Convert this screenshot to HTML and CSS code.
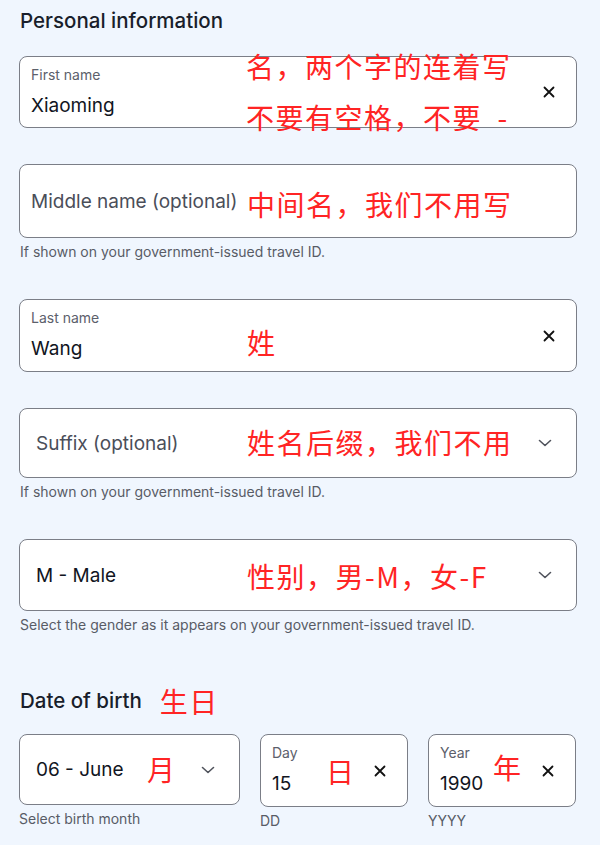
FILE: index.html
```html
<!DOCTYPE html>
<html lang="en">
<head>
<meta charset="utf-8">
<title>Personal information</title>
<link rel="stylesheet" href="styles.css">
</head>
<body>
<main class="page">
  <h2 class="heading">Personal information</h2>

  <div class="field input f1">
    <span class="label">First name</span>
    <span class="value">Xiaoming</span>
    <svg class="clear" viewBox="0 0 12 12"><path d="M1.5 1.5L10.5 10.5M10.5 1.5L1.5 10.5"/></svg>
    <span class="note n1a">名，两个字的连着写</span>
    <span class="note n1b">不要有空格，不要&nbsp;&nbsp;-</span>
  </div>

  <div class="field placeholder f2">
    <span class="ph">Middle name (optional)</span>
    <span class="note n2">中间名，我们不用写</span>
  </div>
  <p class="help">If shown on your government-issued travel ID.</p>

  <div class="field input f3">
    <span class="label">Last name</span>
    <span class="value">Wang</span>
    <svg class="clear" viewBox="0 0 12 12"><path d="M1.5 1.5L10.5 10.5M10.5 1.5L1.5 10.5"/></svg>
    <span class="note n3">姓</span>
  </div>

  <div class="field select f4">
    <span class="ph">Suffix (optional)</span>
    <svg class="chev" viewBox="0 0 14 8"><path d="M1.5 1.5L7 6.5L12.5 1.5"/></svg>
    <span class="note n4">姓名后缀，我们不用</span>
  </div>
  <p class="help">If shown on your government-issued travel ID.</p>

  <div class="field select f5">
    <span class="sel">M - Male</span>
    <svg class="chev" viewBox="0 0 14 8"><path d="M1.5 1.5L7 6.5L12.5 1.5"/></svg>
    <span class="note n5">性别，男-M，女-F</span>
  </div>
  <p class="help">Select the gender as it appears on your government-issued travel ID.</p>

  <h2 class="heading dob">Date of birth <span class="note-inline">生日</span></h2>

  <div class="dob-row">
    <div class="col">
      <div class="field select month">
        <span class="sel">06 - June</span>
        <svg class="chev" viewBox="0 0 14 8"><path d="M1.5 1.5L7 6.5L12.5 1.5"/></svg>
        <span class="note n6">月</span>
      </div>
      <p class="help">Select birth month</p>
    </div>
    <div class="col">
      <div class="field input small">
        <span class="label">Day</span>
        <span class="value">15</span>
        <svg class="clear" viewBox="0 0 12 12"><path d="M1.5 1.5L10.5 10.5M10.5 1.5L1.5 10.5"/></svg>
        <span class="note n7">日</span>
      </div>
      <p class="help">DD</p>
    </div>
    <div class="col">
      <div class="field input small">
        <span class="label">Year</span>
        <span class="value">1990</span>
        <svg class="clear" viewBox="0 0 12 12"><path d="M1.5 1.5L10.5 10.5M10.5 1.5L1.5 10.5"/></svg>
        <span class="note n8">年</span>
      </div>
      <p class="help">YYYY</p>
    </div>
  </div>
</main>
</body>
</html>
```

FILE: styles.css
```css
html, body {
  margin: 0;
  padding: 0;
  background: #f0f6fe;
}

body {
  font-family: Inter, "Noto Sans", "Liberation Sans", sans-serif;
  color: #191e2b;
  width: 600px;
  height: 845px;
  overflow: hidden;
}

.page {
  padding: 0 23px 0 19px;
}

.heading {
  margin: 0 0 21px 1px;
  padding-top: 7px;
  font-size: 20.5px;
  line-height: 28px;
  font-weight: 500;
  color: #191e2b;
}

.heading.dob {
  margin-top: 54px;
  margin-bottom: 19px;
  padding-top: 0;
  display: flex;
  align-items: center;
}

.field {
  position: relative;
  box-sizing: border-box;
  background: #ffffff;
  border: 1px solid #7b7e87;
  border-radius: 8px;
  height: 72px;
}

.input {
  padding: 0 11px;
}

.label {
  position: absolute;
  left: 11px;
  top: 9px;
  font-size: 14px;
  line-height: 18px;
  color: #5c606b;
}

.value {
  position: absolute;
  left: 11px;
  top: 37px;
  font-size: 19px;
  line-height: 24px;
  color: #111522;
}

.placeholder, .select {
  display: flex;
  align-items: center;
}

.placeholder {
  padding: 0 11px;
}

.select {
  padding: 0 16px;
  height: 70px;
}

.ph {
  font-size: 19px;
  color: #4a4e59;
}

.sel {
  font-size: 19px;
  color: #111522;
}

.f2 {
  margin-top: 36px;
  height: 74px;
}

.f3 {
  margin-top: 39px;
  height: 73px;
}

.f4 {
  margin-top: 36px;
}

.f5 {
  margin-top: 39px;
  height: 72px;
}

.help {
  margin: 6px 0 0 1px;
  font-size: 14px;
  line-height: 16px;
  color: #585c66;
}

.clear {
  position: absolute;
  right: 21px;
  top: 50%;
  width: 12px;
  height: 12px;
  margin-top: -6px;
  fill: none;
  stroke: #111;
  stroke-width: 1.8;
  stroke-linecap: round;
}

.chev {
  position: absolute;
  right: 24px;
  top: 50%;
  width: 14px;
  height: 8px;
  margin-top: -4px;
  fill: none;
  stroke: #50535c;
  stroke-width: 1.6;
  stroke-linecap: round;
  stroke-linejoin: round;
}

.dob-row {
  display: grid;
  grid-template-columns: 221px 148px 148px;
  column-gap: 20px;
  align-items: start;
}

.col .help {
  margin-left: 0;
}

.month {
  height: 71px;
}

.small {
  height: 73px;
}

.note,
.note-inline {
  font-family: "Noto Sans CJK SC", "Noto Sans", sans-serif;
  font-size: 28px;
  line-height: 28px;
  letter-spacing: 1.5px;
  color: #ff2424;
  font-weight: 400;
  white-space: nowrap;
}

.note {
  position: absolute;
}

.note-inline {
  margin-left: 18px;
}

.n1a { left: 226px; top: -5px; }
.n1b { left: 226px; top: 46px; }
.n2 { left: 227px; top: 25px; }
.n3 { left: 227px; top: 28px; }
.n4 { left: 227px; top: 19px; }
.n5 { left: 227px; top: 22px; }
.n6 { left: 127px; top: 20px; }
.n7 { left: 65px; top: 22px; }
.n8 { left: 64px; top: 18px; }
```
